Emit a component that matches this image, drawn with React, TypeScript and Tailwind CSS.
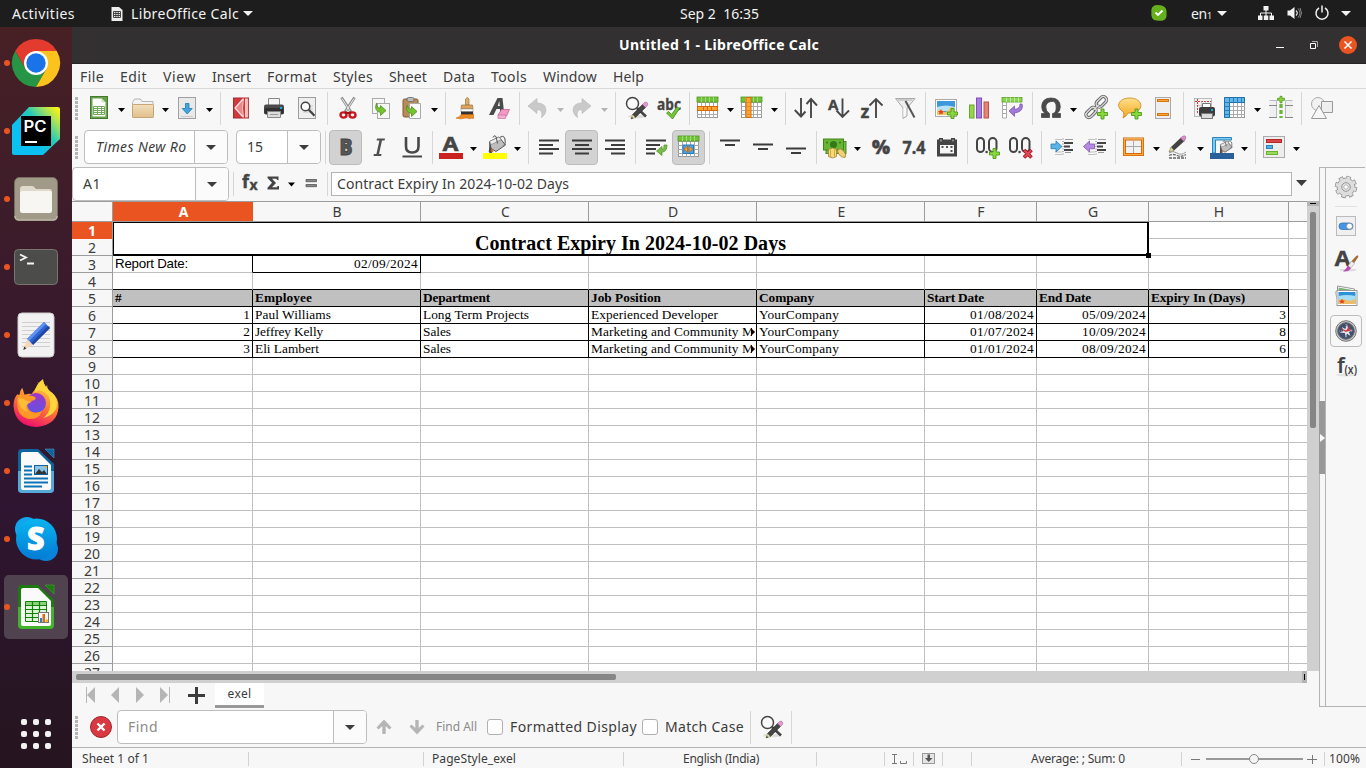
import React, { useLayoutEffect, useRef } from "react";

/** Text whose tracking is adjusted so that it spans `w` pixels. */
function T({ w, className = "", children }: { w: number; className?: string; children: string }) {
  const ref = useRef<HTMLSpanElement>(null);
  useLayoutEffect(() => {
    const el = ref.current;
    if (!el) return;
    el.style.letterSpacing = "0px";
    const natural = el.getBoundingClientRect().width;
    el.style.letterSpacing = `${(w - natural) / children.length}px`;
  }, [w, children]);
  return (
    <span ref={ref} className={`inline-block shrink-0 whitespace-pre ${className}`}>
      {children}
    </span>
  );
}

const plus = (x: number, y: number) => (
  <path
    d={`M${x - 1.5} ${y - 5}h3v3.5h3.5v3h-3.5v3.5h-3v-3.5h-3.5v-3h3.5z`}
    fill="#8ad840"
    stroke="#4e9a16"
    strokeWidth="0.9"
  />
);

const gridCells = (
  <>
    <rect x="1.5" y="1.5" width="20" height="20" fill="#fff" stroke="#999" />
    <path d="M1 6.5h21M1 10.5h21M1 14.5h21M1 18.5h21M5.5 2v20M9.5 2v20M13.5 2v20M17.5 2v20" stroke="#aaa" />
    <rect x="1" y="1" width="21" height="5" fill="#73c23c" stroke="#4e9a1b" strokeWidth="0.8" />
    <path d="M5.5 1v5M9.5 1v5M13.5 1v5M17.5 1v5" stroke="#9ddc70" />
  </>
);

const magnifierPencil = (
  <>
    <ellipse cx="13" cy="20.5" rx="9" ry="1.8" fill="#ddd" />
    <circle cx="8.5" cy="7.5" r="6" fill="#fafafa" stroke="#444" strokeWidth="1.5" />
    <path d="M13 12l9 8.5" stroke="#444" strokeWidth="2.6" />
    <path d="M8.5 18.5L19 8l3 3-10.5 10.5z" fill="#454545" stroke="#222" strokeWidth="0.5" />
    <path d="M8.5 18.5l3 3L7 23z" fill="#efdf86" stroke="#555" strokeWidth="0.4" />
    <path d="M7 23l1-2 1 1.2z" fill="#111" />
    <path d="M18.5 8.5l2-2q1.500-1 2.700.2t.2 2.800l-1.900 2z" fill="#e69ad2" stroke="#965a87" strokeWidth="0.5" />
  </>
);

const bucket = (
  <>
    <path d="M4.500 6.500L14 2l6.500 8-9.500 6.500-5-3z" fill="#bdbdbd" stroke="#555" />
    <path d="M4.500 6.500L14 2l2 2.500-9.500 5z" fill="#eee" stroke="#888" strokeWidth=".7" />
    <path d="M15 2.500q4-3 5 2t-2 7" fill="none" stroke="#777" strokeWidth="1.300" />
    <path d="M8 2.500q1-3 3-1l1.500 7" fill="none" stroke="#555" />
    <path d="M4.500 6.500l2.500 9.500q1 2-1.500 2t-1.500-3z" fill="#4b4b4b" />
    <path d="M7 13l1.500 4H6z" fill="#d4691c" />
  </>
);

const paperLines = <path d="M8 10h10M8 13h10M8 16h10" stroke="#ccc" />;

const Txt = ({ x, y, s, c = "#444", children, cond }: { x: number; y: number; s: number; c?: string; children: string; cond?: number }) => (
  <text x={x} y={y} fontSize={s} fontWeight="bold" fill={c} stroke={c} strokeWidth=".3" fontFamily="'Noto Sans', sans-serif" textLength={cond} lengthAdjust="spacingAndGlyphs">
    {children}
  </text>
);

const icons: Record<string, React.ReactNode> = {
  new: (
    <>
      <rect x="3.500" y=".5" width="17" height="22" fill="#66a04a" stroke="#437a2d" />
      <path d="M5.500 2.500h9l4 4v14h-13z" fill="#fff" />
      <path d="M14.500 2.500v4h4z" fill="#cfe3c4" />
      <path d="M6.500 10.500h11v8h-11zM6.500 12.500h11M6.500 14.500h11M6.500 16.500h11M10.500 10v8.500M14.500 10v8.500" fill="none" stroke="#74a85c" />
    </>
  ),
  open: (
    <>
      <path d="M1.500 21V6.500l2-3.500h6l1.500 2.500h11V21z" fill="#f3f3f3" stroke="#b5b5b5" />
      <rect x="1.500" y="8.500" width="21" height="13" rx=".8" fill="url(#tan)" stroke="#c5a573" />
    </>
  ),
  save: (
    <>
      <rect x="3.500" y="1.500" width="17" height="21" fill="#e9e9e9" stroke="#a0a0a0" />
      <path d="M10.500 7.500h3.500v5h3.200L12.200 18 7.300 12.500h3.200z" fill="#43a5df" stroke="#2277ad" strokeWidth=".8" />
      <path d="M6 20.500h12" stroke="#ccc" />
    </>
  ),
  pdf: (
    <>
      <rect x="4.500" y="2" width="15" height="20" fill="#d3383b" stroke="#a9282c" />
      <path d="M14 3L6 12l8 9" fill="#e88" stroke="#ffe9e9" strokeWidth="1.200" />
      <path d="M14.500 2.500q-2 10 0 19M16.500 2.500v19" fill="none" stroke="#f9c6c6" />
      <path d="M17 2.500h2.200v19H17z" fill="#f0bcbc" />
    </>
  ),
  print: (
    <>
      <path d="M6.500 10V2.500h11V10" fill="#f5f5f5" stroke="#888" />
      <rect x="2" y="8.500" width="20" height="10" rx="2" fill="#4a4a4a" />
      <rect x="2.500" y="12" width="19" height="6" rx="1.500" fill="#303030" />
      <rect x="18" y="11" width="2" height="2" fill="#19a9e8" />
      <path d="M5.500 15.500h13v6h-13z" fill="#ddd" stroke="#888" />
      <path d="M8 18.500h8" stroke="#999" />
    </>
  ),
  preview: (
    <>
      <rect x="3.500" y="1.500" width="17" height="21" fill="#efefef" stroke="#9d9d9d" />
      {paperLines}
      <circle cx="10.500" cy="10.500" r="4.300" fill="#fff" stroke="#444" strokeWidth="1.500" />
      <path d="M13.800 13.800l5.700 6" stroke="#444" strokeWidth="2.300" />
    </>
  ),
  cut: (
    <>
      <path d="M5.500 1.500L15 16M18.500 1.500L9 16" stroke="#8b8b8b" strokeWidth="2.800" />
      <path d="M6 2.500L14 15M18 2.500L10 15" stroke="#eee" strokeWidth="1" />
      <ellipse cx="7.500" cy="19" rx="3" ry="2.600" fill="none" stroke="#c8171e" strokeWidth="2.400" />
      <ellipse cx="16.500" cy="19" rx="3" ry="2.600" fill="none" stroke="#c8171e" strokeWidth="2.400" />
      <path d="M9 16q3 2 6 0" stroke="#a01015" strokeWidth="2" fill="none" />
    </>
  ),
  copy: (
    <>
      <rect x="3.500" y="2.500" width="12" height="15" fill="#f7f7f7" stroke="#aaa" />
      <rect x="8.500" y="7.500" width="12" height="15" fill="#f7f7f7" stroke="#aaa" />
      <path d="M7.500 7q-.5 5 4 5V9.500l5.500 5-5.500 5v-3q-7-1.500-4-9.500z" fill="#74c42f" stroke="#4c9119" strokeWidth=".8" />
    </>
  ),
  paste: (
    <>
      <rect x="3" y="3" width="15" height="18" rx="1.500" fill="#ba8b56" stroke="#7f5c35" />
      <rect x="7" y="1.500" width="7" height="4" rx="1.500" fill="#bbb" stroke="#666" strokeWidth=".8" />
      <path d="M9.500 7.500h11v15h-11z" fill="#fafafa" stroke="#aaa" />
      <path d="M7 9q0 4 4.500 4V10.500l5.500 5-5.500 5v-3q-6.500-1-4.500-8.500z" fill="#74c42f" stroke="#4c9119" strokeWidth=".8" />
    </>
  ),
  brush: (
    <>
      <path d="M11.500 9V3q1.500-3 3.500 0v6z" fill="#ddb071" stroke="#9c7440" strokeWidth=".7" />
      <path d="M7.500 9h11l.5 4H7z" fill="#d9a55c" stroke="#9c7440" strokeWidth=".7" />
      <path d="M7 13h12v3H7z" fill="#fff" stroke="#888" strokeWidth=".5" />
      <path d="M7 15.500h12l.3 3.500H7z" fill="#333" />
      <path d="M7 18.500h12.500v4q-2-.8-4 .2-1.500-1-4.500-.6-4 1.500-9 0 4-1 5-3.600z" fill="#ee8b23" stroke="#c96a0d" strokeWidth=".6" />
    </>
  ),
  clear: (
    <>
      <path d="M2 19L10.500 2h5L17 16h-3.800l-.3-3H9.500L6.500 19z M10.800 10h2l-.5-5z" fill="#4a4a4a" fillRule="evenodd" />
      <path d="M11 19l3.500-5.500h8L19.500 20 11.500 20z" fill="#f19bc3" stroke="#c46493" strokeWidth=".8" />
      <path d="M11 19h8l-.5 3.500h-7.500z" fill="#f5aed0" stroke="#c46493" strokeWidth=".6" />
    </>
  ),
  undo: <path d="M2 10L11 2.500v4.500q9 0 9 7.500-1 5-4.500 7 2-8-4.500-8v4z" fill="#c9c9c9" stroke="#b5b5b5" strokeWidth=".6" />,
  redo: <path d="M21 10L12 2.500v4.500q-9 0-9 7.500 1 5 4.500 7-2-8 4.500-8v4z" fill="#c9c9c9" stroke="#b5b5b5" strokeWidth=".6" />,
  find: magnifierPencil,
  abc: (
    <>
      <text x="0" y="14" fontSize="15.500" fontWeight="bold" fill="#444" stroke="#444" strokeWidth=".3" fontFamily="'Noto Sans', sans-serif" textLength="24" lengthAdjust="spacingAndGlyphs">
        abc
      </text>
      <path d="M9.500 17l2-1.500 3 3L20 11l2.500 1.500-7 10.500z" fill="#72c53a" stroke="#458f1a" strokeWidth=".8" />
    </>
  ),
  rows: (
    <>
      {gridCells}
      <rect x="1.500" y="10.500" width="20" height="4" fill="#ffa534" stroke="#d66a0a" />
      <path d="M7.500 10.500v4M11.500 10.500v4M15.500 10.500v4" stroke="#d66a0a" />
    </>
  ),
  cols: (
    <>
      {gridCells}
      <rect x="6" y="1.500" width="5" height="20" fill="#ffa534" stroke="#d66a0a" />
      <path d="M6 6.500h5M6 10.500h5M6 14.500h5M6 18.500h5" stroke="#e0801f" strokeWidth=".7" />
    </>
  ),
  sort: <path d="M7 2v18M.8 14L7 20.500l4.500-5M17 22V3.500M12.500 8L17 3l6 6.500" fill="none" stroke="#484848" strokeWidth="1.900" />,
  sortaz: (
    <>
      <Txt x={1} y={13.5} s={15}>A</Txt>
      <path d="M15.500 2.500v18M9.500 14.500l6 6.500 6.500-6.500" fill="none" stroke="#484848" strokeWidth="1.900" />
    </>
  ),
  sortza: (
    <>
      <Txt x={0.5} y={22} s={18}>z</Txt>
      <path d="M16 22V3.500M9.500 9.500L16 3l6.500 6.500" fill="none" stroke="#484848" strokeWidth="1.900" />
    </>
  ),
  funnel: (
    <>
      <path d="M2.500 2.500h19.500L14 12v8l-4 2.500V12z" fill="#eee" stroke="#aaa" />
      <path d="M4.500 4h15" stroke="#ccc" strokeWidth="2" />
      <path d="M12.500 5l9 16.500" stroke="#555" strokeWidth="2" />
      <path d="M10.500 12v9l2-1.500V12z" fill="#fff" />
    </>
  ),
  image: (
    <>
      <rect x="1.500" y="3.500" width="21" height="17" fill="#fff" stroke="#aaa" />
      <rect x="3" y="5" width="18" height="14" fill="#3c98dc" />
      <path d="M3 11q9-3 18 0v4H3z" fill="#b7e3f9" />
      <path d="M3 15q3-3 6 0t6-2 6 2v4H3z" fill="#f0c46d" />
      <path d="M7 13l1 2h2l-1.500 1.500.5 2-2-1-2 1 .5-2L4 15h2z" fill="#e1431c" />
      {plus(18.5, 17.5)}
    </>
  ),
  chart: (
    <>
      <rect x="2.500" y="9" width="4.500" height="13" fill="#93d64c" stroke="#68a92b" />
      <rect x="9.500" y="2" width="5" height="20" fill="#a77be0" stroke="#7c50b8" />
      <rect x="17" y="6" width="4.500" height="16" fill="#e58378" stroke="#bc5448" />
    </>
  ),
  pivot: (
    <>
      <path d="M2.500 5v17h4V5M2.500 9.500h4M2.500 13.500h4M2.500 17.500h4" fill="#fff" stroke="#aaa" />
      <rect x="2" y="1.500" width="20" height="4.500" fill="#8dd357" stroke="#57a222" strokeWidth=".8" />
      <path d="M6.500 1.500v4.500M10.500 1.500v4.500M14.500 1.500v4.500M18.500 1.500v4.500" stroke="#c0ea9d" />
      <path d="M20 8q2.500-1 2.500 2 0 6-8 7v3.500L9 15l5.500-5v3.300Q20 13 20 8z" fill="#a07ad6" stroke="#7a52b3" strokeWidth=".7" />
    </>
  ),
  omega: (
    <path
      d="M2.500 21.500h8v-4Q6.800 15.500 6.800 11T12 5.500 17.200 11t-3.700 6.500v4h8v-4h-3.700q3.500-2 3.500-7Q21 2 12 2T2.700 10.500q0 5 3.500 7H2.500z"
      fill="#4a4a4a"
      stroke="#4a4a4a"
      strokeWidth=".8"
    />
  ),
  link: (
    <>
      <g fill="none" stroke="#666" strokeWidth="3.200">
        <rect x="10.500" y="2.500" width="12" height="6.500" rx="3.200" transform="rotate(-45 16.500 6)" />
        <rect x="0" y="13.500" width="12" height="6" rx="3" transform="rotate(-45 6 16.500)" />
        <path d="M8 14.500l6-6" />
      </g>
      <g fill="none" stroke="#ddd" strokeWidth="1.300">
        <rect x="10.500" y="2.500" width="12" height="6.500" rx="3.200" transform="rotate(-45 16.500 6)" />
        <rect x="0" y="13.500" width="12" height="6" rx="3" transform="rotate(-45 6 16.500)" />
        <path d="M8 14.500l6-6" />
      </g>
      {plus(17.5, 18)}
    </>
  ),
  comment: (
    <>
      <path d="M12 2c14 0 15 15 0 15q-1 0-2 0-1 3-5 5 1.500-3 .5-6C-3 11 0 2 12 2z" fill="url(#amber)" stroke="#cb8618" strokeWidth=".8" />
      {plus(18.5, 18)}
    </>
  ),
  header: (
    <>
      <rect x="4.500" y="1.500" width="15" height="21" fill="#eee" stroke="#aaa" />
      <rect x="6.500" y="3.500" width="11" height="2" fill="#fba63d" stroke="#d9740c" />
      <rect x="6.500" y="17.500" width="11" height="2" fill="#fba63d" stroke="#d9740c" />
    </>
  ),
  range: (
    <>
      <rect x="2.500" y="2.500" width="17" height="18" fill="#f2f2f2" stroke="#bbb" />
      <path d="M5.500 3v15M3 5.500h16" stroke="#dc3535" strokeDasharray="2 1" />
      <path d="M9.500 5.500v12M13.500 5.500v6M6 9.500h12" stroke="#ccc" />
      <path d="M10.500 12V7.500h8V12" fill="#fff" stroke="#777" />
      <rect x="7" y="11" width="16" height="9.500" rx="2" fill="#3d3d3d" />
      <rect x="19" y="13" width="2" height="2" fill="#19a9e8" />
      <rect x="9.500" y="17.500" width="11" height="5" fill="#ddd" stroke="#777" />
    </>
  ),
  freeze: (
    <>
      <rect x="1.500" y="1.500" width="20" height="20" fill="#fff" stroke="#999" />
      <path d="M1 10.500h21M1 14.500h21M1 18.500h21M10.500 1v21M14.500 1v21M18.500 1v21" stroke="#aaa" />
      <path d="M1.500 1.500h20v5h-15v15h-5z" fill="#62b5ea" stroke="#1e72aa" />
      <path d="M6.500 2v4.500M10.500 2v4.500M14.500 2v4.500M18.500 2v4.500M2 6.500h4.500M2 10.500h4.500M2 14.500h4.500M2 18.500h4.500" stroke="#2c80ba" />
    </>
  ),
  split: (
    <>
      <path d="M.5 4.500h7v17h-7M23.500 4.500h-7v17h7" fill="#f0f0f0" stroke="#bbb" />
      <path d="M0 9.500h8M16 9.500h8M0 21.500h8M16 21.500h8" stroke="#888" />
      <path d="M12 8v14" stroke="#4d9e1a" strokeWidth="3" strokeDasharray="4 2" />
      <path d="M12 8v14" stroke="#7ac843" strokeWidth="1.300" strokeDasharray="4 2" />
      <path d="M11 .3h2v2h2.500v2H13v2.500h-2V4.300H8.500v-2H11z" fill="#8ad840" stroke="#4e9a16" strokeWidth=".8" />
    </>
  ),
  shapes: (
    <>
      <circle cx="8" cy="8" r="6.500" fill="#f2f2f2" stroke="#aaa" />
      <path d="M11.500 5.500h11v11h-11z" fill="#eee" stroke="#999" />
      <path d="M9 9.500l7.500 13h-15z" fill="#f7f7f7" stroke="#999" />
    </>
  ),
  bold: (
    <text x="5.500" y="20" fontFamily="'Noto Sans',sans-serif" fontWeight="900" fontSize="22" fill="#555" stroke="#444" strokeWidth=".9" textLength="13" lengthAdjust="spacingAndGlyphs">
      B
    </text>
  ),
  italic: <path d="M10 3.500h8l-.4 2H15l-3 13.500h2.500l-.4 2H6.500l.4-2h2.500l3-13.500H9.600z" fill="#505050" />,
  underline: (
    <>
      <path d="M6 2v9.500q0 6 6.200 6t6.300-6V2" fill="none" stroke="#484848" strokeWidth="2.600" />
      <path d="M2.500 21.500h19.500" stroke="#484848" strokeWidth="2" />
    </>
  ),
  fontcolor: (
    <>
      <text x="3.500" y="16" fontSize="20" fontWeight="bold" fill="#444" stroke="#444" strokeWidth=".5" fontFamily="'Noto Sans', sans-serif" textLength="16" lengthAdjust="spacingAndGlyphs">
        A
      </text>
      <path d="M0 18h24v6H0z" fill="#cb2020" />
    </>
  ),
  fill: (
    <>
      <g transform="translate(2 0)">{bucket}</g>
      <path d="M0 18h24v6H0z" fill="#ff0" />
    </>
  ),
  left: <path d="M2 5.500h20M2 10h14M2 14h20M2 18.500h14" stroke="#3c3c3c" strokeWidth="1.800" />,
  center: <path d="M2 5.500h20M5 10h14M2 14h20M5 18.500h14" stroke="#3c3c3c" strokeWidth="1.800" />,
  right: <path d="M2 5.500h20M8 10h14M2 14h20M8 18.500h14" stroke="#3c3c3c" strokeWidth="1.800" />,
  wrap: (
    <>
      <path d="M2 5.500h20M2 10h14M2 14h10M2 18.500h9" stroke="#3c3c3c" strokeWidth="1.800" />
      <path d="M20 10h3q0 7-5 7v3.500L12.500 16 18 11.500v3q2.500-.5 2-4.500z" fill="#78bf48" stroke="#508b2a" strokeWidth=".7" />
    </>
  ),
  merge: (
    <>
      {gridCells}
      <rect x="6" y="10" width="10.500" height="8.500" fill="#48a4e8" stroke="#227bbd" />
      <path d="M10.500 11v6.500L7 14.200zM12.200 11v6.500l3.500-3.300z" fill="#f69a28" stroke="#c05b08" strokeWidth=".6" />
    </>
  ),
  top: <path d="M2 5.500h20M7 10h10" stroke="#3c3c3c" strokeWidth="1.800" />,
  middle: <path d="M2 9.500h20M7 14h10" stroke="#3c3c3c" strokeWidth="1.800" />,
  bottom: <path d="M2 13.500h20M7 18h10" stroke="#3c3c3c" strokeWidth="1.800" />,
  money: (
    <>
      <rect x="3" y="6.500" width="20" height="12" fill="#75bd44" stroke="#498921" />
      <rect x=".5" y="4" width="20" height="11" fill="#68b536" stroke="#408718" />
      <circle cx="10.500" cy="9.500" r="3.500" fill="#32791a" />
      <circle cx="4" cy="7.500" r="1" fill="#32791a" />
      <circle cx="17" cy="7.500" r="1" fill="#32791a" />
      <path d="M5.500 14.500q4-3 8 0v7q-4 3-8 0z" fill="#f3da7a" stroke="#a7832a" strokeWidth=".8" />
      <path d="M7.500 14.500v7.500M11.500 14.500v7.500" stroke="#d2ab48" />
      <path d="M15 14.500q3-2 6 2t1 6q-4 0-6-3t-1-5z" fill="#eed27a" stroke="#a7832a" strokeWidth=".8" />
    </>
  ),
  percent: (
    <text x="3" y="19" fontFamily="'Noto Sans',sans-serif" fontWeight="900" fontSize="19" fill="#444" stroke="#444" strokeWidth=".5" textLength="18" lengthAdjust="spacingAndGlyphs">
      %
    </text>
  ),
  number: (
    <text x=".5" y="18.500" fontSize="18.500" fontWeight="bold" fill="#444" stroke="#444" strokeWidth=".5" fontFamily="'Noto Sans', sans-serif" textLength="23" lengthAdjust="spacingAndGlyphs">
      7.4
    </text>
  ),
  calendar: (
    <>
      <path d="M2 4.500h2V3h4v1.500h8V3h4v1.500h2V21.500H2z" fill="#444" />
      <path d="M5 10h14v8.500H5z" fill="#f5f5f5" />
      <path d="M6.500 12h2M11 12h2M15.500 12h2M15.500 16h2" stroke="#555" strokeWidth="2" />
      <path d="M6 4.500v2M18 4.500v2" stroke="#ccc" />
    </>
  ),
  addDec: (
    <>
      <g fill="none" stroke="#444" strokeWidth="2">
        <rect x="1" y="3" width="7" height="14" rx="3.500" />
        <rect x="13" y="3" width="7.500" height="14" rx="3.700" />
      </g>
      <circle cx="10.600" cy="17" r="1.300" fill="#444" />
      {plus(18.5, 18.5)}
    </>
  ),
  delDec: (
    <>
      <g fill="none" stroke="#444" strokeWidth="2">
        <rect x="1" y="3" width="7" height="14" rx="3.500" />
        <rect x="13" y="3" width="7.500" height="14" rx="3.700" />
      </g>
      <circle cx="10.600" cy="17" r="1.300" fill="#444" />
      <path d="M15 15l7.500 7.500M22.500 15L15 22.500" stroke="#a31220" strokeWidth="3.600" />
      <path d="M15.500 15.500l6.500 6.500M22 15.500L15.500 22" stroke="#e34a55" strokeWidth="1.900" />
    </>
  ),
  indent: (
    <>
      <path d="M5 4.500h7M5 19.500h7M5 17h7" stroke="#bbb" strokeWidth=".9" />
      <path d="M13 3.500v17" stroke="#777" strokeDasharray="1 1.500" />
      <path d="M15 4.500h8M15 17.500h6" stroke="#999" />
      <path d="M14 8h9M14 11.500h6M14 15h9" stroke="#444" strokeWidth="1.900" />
      <path d="M1 9h5V6l6 5.500-6 5.500v-3.300H1z" fill="#5bb5e7" stroke="#2a7cad" strokeWidth=".8" />
    </>
  ),
  outdent: (
    <>
      <path d="M5 4.500h7M5 19.500h7M5 17h7" stroke="#bbb" strokeWidth=".9" />
      <path d="M13 3.500v17" stroke="#777" strokeDasharray="1 1.500" />
      <path d="M15 4.500h8M15 17.500h6" stroke="#999" />
      <path d="M14 8h9M14 11.500h6M14 15h9" stroke="#444" strokeWidth="1.900" />
      <path d="M11.500 9H6.500V6L.5 11.500l6 5.500v-3.300h5z" fill="#b48be2" stroke="#8053b6" strokeWidth=".8" />
    </>
  ),
  borders: (
    <>
      <rect x="1.500" y="3" width="20" height="17.500" fill="#f2f2f2" stroke="#d2690b" />
      <rect x="2.500" y="4" width="18" height="15.500" fill="none" stroke="#ffa83d" strokeWidth="1.300" />
      <rect x="3.500" y="5" width="16" height="13.500" fill="none" stroke="#d2690b" />
      <path d="M11.500 6v12M4 11.500h15" stroke="#aaa" />
    </>
  ),
  linestyle: (
    <>
      <path d="M5 12L15 2.500 18.500 6 8 15.500z" fill="#444" />
      <path d="M5 12l3 3.500L3 17z" fill="#e9e18c" stroke="#555" strokeWidth=".5" />
      <path d="M14.500 3q4-3.500 5-1.500T18 6.500z" fill="#dc8acb" stroke="#965a87" strokeWidth=".5" />
      <path d="M3 18q4-3 8 0t9-1" fill="none" stroke="#999" />
      <path d="M3 20.500q4-2 8 0t9-1M3 23h17" fill="none" stroke="#666" strokeWidth="1.300" strokeDasharray="3 1" />
    </>
  ),
  bordercolor: (
    <>
      <path d="M2.500 18V2.500h19V5H5.500v13z" fill="#7bcdf0" stroke="#2b85bb" />
      <g transform="translate(7 5) scale(.74)">{bucket}</g>
      <path d="M0 18h24v6H0z" fill="#2a6099" />
    </>
  ),
  condformat: (
    <>
      <rect x="1.500" y="1.500" width="21" height="21" fill="#ededed" stroke="#aaa" />
      <rect x="4.500" y="4.500" width="15" height="3" fill="#dc4545" stroke="#b12a2a" />
      <rect x="4.500" y="10.500" width="6" height="3" fill="#54aee2" stroke="#2a82b5" />
      <rect x="4.500" y="16.500" width="11" height="3" fill="#9bd95d" stroke="#6daf2f" />
    </>
  ),
  gear: (
    <>
      <circle cx="12" cy="12" r="9.500" fill="none" stroke="#909090" strokeWidth="3.500" strokeDasharray="4.460 3" />
      <circle cx="12" cy="12" r="9" fill="#ddd" stroke="#999" />
      <circle cx="12" cy="12" r="9.300" fill="none" stroke="#dedede" strokeWidth="2.400" strokeDasharray="3.300 4" strokeDashoffset="-.5" />
      <circle cx="12" cy="12" r="4.200" fill="#f7f7f7" stroke="#888" />
      <circle cx="12" cy="12" r="2.300" fill="#fff" stroke="#aaa" />
    </>
  ),
  props: (
    <>
      <rect x="2.500" y="2.500" width="19" height="19" fill="#f0f0f0" stroke="#bbb" />
      <rect x="5" y="9" width="14" height="6.500" rx="3.200" fill="#4596e6" stroke="#3672b2" strokeWidth=".8" />
      <circle cx="15.500" cy="12.200" r="3" fill="#fff" stroke="#778899" strokeWidth=".8" />
    </>
  ),
  styles: (
    <>
      <ellipse cx="14" cy="21" rx="9" ry="1.500" fill="#ddd" />
      <Txt x={0.5} y={16.5} s={22} cond={16}>A</Txt>
      <path d="M22 7.500q3-2 1.500 1L17 18l-2.500-2z" fill="#b46a28" stroke="#7d4415" strokeWidth=".5" />
      <path d="M17.500 12l3 2.500-4 5-2.500-2.500z" fill="#eee" stroke="#999" strokeWidth=".5" />
      <path d="M14 16.500l3 2.500q-2 4-8 3.500 3-2 5-6z" fill="#b94bb0" />
    </>
  ),
  gallery: (
    <>
      <path d="M3.500 2l17 3v12l-17 2z" fill="#fff" stroke="#999" />
      <path d="M4.500 3.500l14 2.500v8H4.500z" fill="#7eb07a" />
      <path d="M1 8l4-2v14z" fill="#fff" stroke="#aaa" strokeWidth=".7" />
      <rect x="3" y="6.500" width="20" height="15" fill="#fff" stroke="#999" />
      <rect x="4.500" y="8" width="17" height="12" fill="#2d92d8" />
      <path d="M4.500 12q8-2 17 0v5h-17z" fill="#a5dcf6" />
      <path d="M4.500 16q3-2 7 0t10-1v5h-17z" fill="#edbc63" />
      <path d="M8 15l1 1.500 2 .2-1.500 1.200.3 1.600L8 18.700l-1.800.8.3-1.600L5 16.700l2-.2z" fill="#e1431c" />
    </>
  ),
  compass: (
    <>
      <circle cx="12" cy="12" r="10.300" fill="#c9c9c9" stroke="#777" />
      <circle cx="12" cy="12" r="8.300" fill="#41506e" stroke="#666" />
      <path d="M12 5v14M5 12h14" stroke="#9aa3b5" strokeWidth="1" strokeDasharray="1 1" />
      <path d="M8 8l3.500 2.200L13 5l1.200 5.500L19 11l-4.200 2 1.700 4-3.700-2.500L12 19l-1-5-5.500-.5 4.200-1.500z" fill="#e8ebf0" />
      <path d="M5.500 8.500l6.500 3L16.500 5.500l-1.500 5 3.500.5-5 1.500-2 .5z" fill="#cf3740" />
    </>
  ),
  fx: (
    <>
      <ellipse cx="12" cy="20" rx="10" ry="1.500" fill="#e4e4e4" />
      <text x="3" y="18" fontFamily="'Noto Sans',sans-serif" fontSize="21" fontWeight="600" fill="#444">
        f
      </text>
      <text x="10.500" y="19" fontFamily="'Noto Sans',sans-serif" fontSize="12" fontWeight="600" fill="#444" textLength="12.500" lengthAdjust="spacingAndGlyphs">
        (x)
      </text>
    </>
  ),
};

const Icon = ({ n, className = "" }: { n: string; className?: string }) => (
  <svg viewBox="0 0 24 24" className={`size-6 shrink-0 overflow-visible ${className}`}>
    {icons[n]}
  </svg>
);

const Arrow = ({ className = "w-[7px] h-1 text-black" }: { className?: string }) => (
  <svg viewBox="0 0 8 4" preserveAspectRatio="none" className={`shrink-0 ${className}`}>
    <path d="M0 0h8L4 4z" fill="currentColor" />
  </svg>
);

const Btn = ({ n, on }: { n: string; on?: boolean }) => (
  <div
    className={`flex h-[35px] w-[33px] shrink-0 items-center ${on ? "rounded-[4px] border border-[#bcbcbc] bg-[#d2d2d2] pl-1" : "pl-[5px]"}`}
  >
    <Icon n={n} />
  </div>
);

const Drop = ({ n, gray }: { n: string; gray?: boolean }) => (
  <div className="flex h-[35px] w-11 shrink-0 items-center gap-[7px] pl-[3px]">
    <Icon n={n} />
    <Arrow className={gray ? "mt-[3px] h-1 w-[7px] text-[#b5b5b5]" : "mt-[3px] h-1 w-[7px] text-black"} />
  </div>
);

const Sep = () => (
  <div className="flex h-[33px] w-2 shrink-0 justify-center">
    <div className="ml-px w-px bg-[#d6d6d6]" />
  </div>
);

const Grip = () => (
  <div className="mr-[6px] ml-[3px] flex w-[3px] shrink-0 flex-col gap-px">
    {[0, 1, 2, 3, 4, 5].map((i) => (
      <div key={i} className="h-[3px] w-[3px] bg-[#b4b4b4]" />
    ))}
  </div>
);

function ToolRow({ spec }: { spec: string }) {
  return (
    <>
      {spec.split(" ").map((s, i) => {
        if (s === "|") return <Sep key={i} />;
        const name = s.replace(/[:!*]/g, "");
        if (s.endsWith(":")) return <Drop key={i} n={name} />;
        if (s.endsWith("!")) return <Drop key={i} n={name} gray />;
        return <Btn key={i} n={name} on={s.endsWith("*")} />;
      })}
    </>
  );
}

const menus: [string, number, string][] = [
  ["File", 24, "mr-4"],
  ["Edit", 27, "mr-4"],
  ["View", 33, "mr-4"],
  ["Insert", 39, "mr-4"],
  ["Format", 50, "mr-4"],
  ["Styles", 40, "mr-4"],
  ["Sheet", 38, "mr-4"],
  ["Data", 32, "mr-4"],
  ["Tools", 36, "mr-4"],
  ["Window", 54, "mr-4"],
  ["Help", 31, ""],
];

const header = ["#", "Employee", "Department", "Job Position", "Company", "Start Date", "End Date", "Expiry In (Days)"];
const headerW = [7, 57, 67, 70, 55, 57, 52, 94];
const records = [
  ["1", "Paul Williams", "Long Term Projects", "Experienced Developer", "YourCompany", "01/08/2024", "05/09/2024", "3"],
  ["2", "Jeffrey Kelly", "Sales", "Marketing and Community M", "YourCompany", "01/07/2024", "10/09/2024", "8"],
  ["3", "Eli Lambert", "Sales", "Marketing and Community M", "YourCompany", "01/01/2024", "08/09/2024", "6"],
];
const recordW = [
  [0, 76, 106, 127, 80, 64, 64, 0],
  [0, 68, 28, 163, 80, 64, 64, 0],
  [0, 64, 28, 163, 80, 64, 64, 0],
];
const gridCols = "grid grid-cols-[140px_168px_168px_168px_168px_112px_112px_140px_18px]";

function Sheet() {
  const rows = Array.from({ length: 27 }, (_, i) => i + 1);
  return (
    <div className="relative flex h-[470px] w-[1235px] flex-col overflow-hidden bg-white">
      <div className="flex h-[21px] shrink-0 border-y border-[#9c9c9c] bg-[#f7f7f7] text-[14px] leading-[19px] text-[#3c3c3c]">
        <div className="w-[41px] border-r border-[#9c9c9c]" />
        <div className={`${gridCols} text-center`}>
          {["A", "B", "C", "D", "E", "F", "G", "H", ""].map((c, i) => (
            <div
              key={i}
              className={
                i === 0
                  ? "border-r border-[#e95420] bg-[#e95420] pl-0.5 font-bold text-white"
                  : i === 8
                    ? ""
                    : i === 2 || i === 4
                      ? "border-r border-[#9c9c9c] pl-0.5"
                      : "border-r border-[#9c9c9c] pl-px"
              }
            >
              {c}
            </div>
          ))}
        </div>
      </div>
      <div className="flex">
        <div className="w-[41px] shrink-0 border-r border-[#9c9c9c] bg-[#f7f7f7] text-center text-[14px] text-[#3c3c3c]">
          {rows.map((r) => (
            <div
              key={r}
              className={`h-[17px] overflow-hidden border-b leading-[18px] ${r === 1 ? "border-[#e95420] bg-[#e95420] font-bold text-white" : "border-[#9c9c9c]"}`}
            >
              {r}
            </div>
          ))}
        </div>
        <div className={`${gridCols} auto-rows-[17px] font-['Liberation_Serif',serif] text-[13.33px] leading-4 text-black`}>
          <div className="col-span-7 row-span-2 flex justify-center pt-[9px] pr-px text-[20px] leading-6 font-bold">
            <T w={311}>Contract Expiry In 2024-10-02 Days</T>
          </div>
          {rows.map((r) =>
            header.concat("").map((_, c) => {
              if (r <= 2 && c < 7) return null;
              const table = r >= 5 && r <= 8 && c < 8;
              const right = table || (r === 3 && c < 2) ? "border-r-black" : "border-r-[#c0c0c0]";
              const bottom = table || (r === 4 && c < 8) || (r === 3 && c === 1) ? "border-b-black" : "border-b-[#c0c0c0]";
              const edge = c === 8 ? "border-b" : "border-r border-b";
              const bg = r === 5 && c < 8 ? "bg-[#c0c0c0] font-bold" : "";
              const numeric = (r > 5 && (c === 0 || c > 4)) || (r === 3 && c === 1);
              const clipped = c === 3 && (r === 7 || r === 8);
              let content: React.ReactNode = null;
              if (r === 3 && c === 0) content = <T w={73} className="font-['Liberation_Sans',sans-serif]">Report Date:</T>;
              if (r === 3 && c === 1) content = <T w={64}>02/09/2024</T>;
              if (r === 5 && c < 8) content = <T w={headerW[c]}>{header[c]}</T>;
              if (r > 5 && table) {
                const v = records[r - 6][c];
                const w = recordW[r - 6][c];
                content = w ? <T w={w}>{v}</T> : v;
                if (clipped) content = <div className="w-[161px] overflow-hidden">{content}</div>;
              }
              return (
                <div
                  key={`${r}-${c}`}
                  className={`relative flex min-w-0 overflow-hidden px-0.5 ${edge} ${right} ${bottom} ${bg} ${numeric ? "justify-end" : ""}`}
                >
                  {content}
                  {clipped && (
                    <svg viewBox="0 0 4 6" className="absolute top-[5px] right-px h-1.5 w-1">
                      <path d="M0 0h1l3 3-3 3H0z" fill="#000" />
                      <path d="M2 1.500l2 1.500-1 .5z" fill="#c00" />
                    </svg>
                  )}
                </div>
              );
            }),
          )}
        </div>
      </div>
      <div className="absolute top-[21px] left-[41px] h-[34px] w-[1036px] border-t border-r-2 border-b-2 border-l border-black">
        <div className="absolute -right-1 -bottom-1 size-[5px] bg-black" />
      </div>
    </div>
  );
}

const Combo = ({ className, children }: { className: string; children: React.ReactNode }) => (
  <div className={`flex h-[34px] shrink-0 items-center overflow-hidden rounded-[4px] border border-[#bdbdbd] bg-white ${className}`}>
    <div className="flex h-full flex-1 items-center overflow-hidden pb-0.5">{children}</div>
    <div className="flex h-full w-[33px] items-center justify-center border-l border-[#bdbdbd] bg-[#fbfbfb]">
      <Arrow className="h-[5px] w-[10px] text-[#3c3c3c]" />
    </div>
  </div>
);

function Doc({ blue }: { blue?: boolean }) {
  const dark = blue ? "#0e639c" : "#1d7a10";
  const light = blue ? "#57a9d8" : "#43b22c";
  return (
    <>
      <path d="M10 2h16l16 15v25q0 4-4 4H10q-4 0-4-4V6q0-4 4-4z" fill={dark} />
      <path d="M6 24h36v18q0 4-4 4H10q-4 0-4-4z" fill={light} />
      <path d="M33 2h9v9z" fill={dark} stroke={light} strokeWidth=".5" />
      <path d="M11 5h15l13 13v23q0 2-2 2H11q-2 0-2-2V7q0-2 2-2z" fill="#fafafa" />
      {blue ? (
        <>
          <path d="M12 19.500h8M12 23.500h8M12 27.500h8M12 31.500h24M12 35.500h24M12 39.500h18" stroke="#0e72b4" strokeWidth="1.900" />
          <rect x="22.500" y="18.500" width="13" height="9" fill="#89c4e8" stroke="#0e639c" />
          <path d="M23 27l4-5 3 3 2-2 3 4z" fill="#333" />
          <path d="M32 19h3v3z" fill="#f3b01b" />
        </>
      ) : (
        <>
          <path d="M13.500 18.500h21v20h-21z" fill="#dff5d8" stroke="#138008" />
          <path d="M14 19h20v3.500H14z" fill="#8ad27b" />
          <path d="M13 22.500h22M13 26.500h22M13 30.500h22M13 34.500h22M20.500 18v20M27.500 18v20" stroke="#138008" strokeWidth="1.200" />
          <rect x="26.500" y="29.500" width="10" height="10" fill="#f7f7f7" stroke="#777" />
          <path d="M28 35h2v4h-2z" fill="#2b83c2" />
          <path d="M30.500 31h2.500v8h-2.500z" fill="#df6a16" />
          <path d="M33.500 36.500H36V39h-2.500z" fill="#e8b923" />
        </>
      )}
    </>
  );
}

const dock: React.ReactNode[] = [
  <>
    <path d="M3.200 12A24 24 0 0 1 44.800 12H24L13.600 30z" fill="#e33b2e" />
    <path d="M3.200 12A24 24 0 0 0 24 48L34.400 30H13.600z" fill="#269546" />
    <path d="M44.800 12A24 24 0 0 1 24 48L34.400 30 24 12z" fill="#fcc31e" />
    <circle cx="24" cy="24" r="12" fill="#fff" />
    <circle cx="24" cy="24" r="9.700" fill="#1a73e8" />
  </>,
  <>
    <path d="M17 0h29q2 0 2 2v30L31 48H2q-2 0-2-2V18z" fill="url(#pc)" />
    <path d="M9 9h30v30H9z" fill="#000" />
    <path d="M13 34h12v2H13z" fill="#fff" />
    <text x="11.500" y="24.500" fontSize="15.500" fontWeight="600" fontFamily="Inter, sans-serif" fill="#fff" textLength="23" lengthAdjust="spacingAndGlyphs">
      PC
    </text>
  </>,
  <>
    <rect x="2.500" y="2.500" width="43" height="43" rx="5" fill="#a29a89" stroke="#756e60" />
    <path d="M3 41q0 4 4 4h34q4 0 4-4" fill="none" stroke="#bcb5a5" strokeWidth="1.500" />
    <path d="M8 14q0-3 3-3h9q2 0 3 2l1 1h13q3 0 3 3v18H8z" fill="#ded9cb" />
    <rect x="8" y="16" width="32" height="22" rx="2.500" fill="#f8f6f2" />
  </>,
  <>
    <rect x="2.500" y="6.500" width="43" height="35" rx="4" fill="#4c4c4a" stroke="#77776f" />
    <path d="M8 11.500l6 3-6 3M15 20.500h7" fill="none" stroke="#f5f5f5" strokeWidth="1.800" />
  </>,
  <>
    <rect x="6" y="2" width="36" height="44" rx="4" fill="#f2f2f2" stroke="#ccc" />
    <path d="M10 11.500h28M10 15.500h28M10 19.500h28M10 23.500h28M10 27.500h28M10 31.500h28M10 35.500h28" stroke="#cfcfcf" />
    <path d="M15 28L32 11l6 6-17 17z" fill="#3064d4" />
    <path d="M15 28L32 11l2 2-17 17z" fill="#5d91f2" />
    <path d="M19 32L36 15l2 2-17 17z" fill="#2148a0" />
    <path d="M15 28l6 6-9.500 4.500z" fill="#f5d6b8" />
    <path d="M12.300 35.500l2 2-3 1.500z" fill="#333" />
  </>,
  <>
    <path d="M24 2q3 4 7 0Q33 8 39 13q8 6 7.500 15-1 18-22 20Q3 47 1.500 27q0-8 4-12l2 3q0-7 3-9l2 7q4-2 7-1L27 5z" fill="url(#fox)" />
    <path d="M31 0q-8 6-8 13 4-3 9 0 8 5 6 15-1 7-7 11Q46 35 45 23q-1-8-8-11-2-3-2-6-1 1-1 3Q31 4 31 0z" fill="#ffd53d" />
    <circle cx="24" cy="24" r="10" fill="url(#plum)" />
    <path d="M6 16q6-2 11 1 4-1 7 2-1 3-6 3-5 3-1 9 5 5 13 1-3 9-13 8Q2 37 6 16z" fill="#ff9826" />
    <path d="M6 19q5 0 9 3l5 .5q-3 2-4 2Q12 29 16 33q-7-2-9-8z" fill="#ffbc38" />
  </>,
  <Doc blue />,
  <>
    <circle cx="15" cy="14" r="12" fill="#12a5ef" />
    <circle cx="34" cy="34" r="12" fill="#0a83da" />
    <circle cx="24.500" cy="24" r="20.500" fill="url(#sky)" />
    <text x="15" y="35" fontSize="31" fontWeight="900" stroke="#fff" strokeWidth=".8" fontFamily="'Noto Sans', sans-serif" fill="#fff" textLength="17.500" lengthAdjust="spacingAndGlyphs">
      S
    </text>
  </>,
  <Doc />,
];

function Dock() {
  return (
    <div className="flex w-[72px] shrink-0 flex-col gap-1 bg-linear-to-b from-[#472024] via-[#2f1531] via-65% to-[#25151f] pt-1">
      {dock.map((d, i) => (
        <div key={i} className={`ml-1 flex h-16 w-16 items-center rounded-[5px] ${i === 8 ? "bg-[#51424f]" : ""}`}>
          <div className="size-[6px] rounded-full bg-[#e95420]" />
          <svg viewBox="0 0 48 48" className="ml-0.5 size-12 overflow-visible">
            {d}
          </svg>
        </div>
      ))}
      <div className="mt-[76px] ml-[21px] grid w-[30px] grid-cols-3 gap-1.5">
        {Array.from({ length: 9 }, (_, i) => (
          <div key={i} className="size-1.5 rounded-[2px] bg-[#f2f2f2]" />
        ))}
      </div>
    </div>
  );
}

const VSep = ({ className = "" }: { className?: string }) => <div className={`h-3.5 w-px shrink-0 bg-[#d2d2d2] ${className}`} />;

export default function App() {
  return (
    <div className="flex h-[768px] w-[1366px] flex-col overflow-hidden bg-[#f7f7f7] font-['Noto_Sans',sans-serif] text-[14px] text-[#3c3c3c]">
      <svg className="absolute size-0">
        <defs>
          <linearGradient id="tan" x2="0" y2="1"><stop stopColor="#f2dfbd" /><stop offset="1" stopColor="#e0bf8b" /></linearGradient>
          <linearGradient id="amber" x2="0" y2="1"><stop stopColor="#ffe08a" /><stop offset="1" stopColor="#f3a620" /></linearGradient>
          <linearGradient id="pc" x1=".3" y1=".6" x2="1" y2="0"><stop stopColor="#0bc0f2" /><stop offset=".4" stopColor="#25cbb8" /><stop offset=".7" stopColor="#a5e35c" /><stop offset=".92" stopColor="#f4f219" /></linearGradient>
          <linearGradient id="fox" x1=".8" y1="0" x2=".4" y2="1"><stop stopColor="#ffe14b" /><stop offset=".5" stopColor="#ff8230" /><stop offset="1" stopColor="#ee126b" /></linearGradient>
          <linearGradient id="plum" x2="0" y2="1"><stop stopColor="#a235c4" /><stop offset="1" stopColor="#5f55e6" /></linearGradient>
          <linearGradient id="sky" x2="0" y2="1"><stop stopColor="#08b5f0" /><stop offset="1" stopColor="#047bd5" /></linearGradient>
        </defs>
      </svg>

      <div className="flex h-[27px] shrink-0 items-center bg-[#1d1d1d] pl-3 text-[#f2f2f2]">
        <T w={63}>Activities</T>
        <svg viewBox="0 0 12 14" className="ml-9 h-3.5 w-3">
          <path d="M.5 0H8l3.500 3v11H.5z" fill="#eee" />
          <path d="M2.500 4.500h7v6h-7zM2.500 6.500h7M2.500 8.500h7M4.800 4.500v6M7.200 4.500v6" fill="none" stroke="#333" strokeWidth=".9" />
        </svg>
        <T w={108} className="ml-2">LibreOffice Calc</T>
        <Arrow className="ml-1 h-[5px] w-[10px]" />
        <T w={79} className="ml-[427px]">Sep 2  16:35</T>
        <svg viewBox="0 0 16 16" className="mb-0.5 ml-[392px] size-4">
          <path d="M4 .3q4-.8 8 .7 4 2 3.500 7 .8 6-3.500 7.500-5 .8-9-.5Q-.5 12 .5 8-.5 2 4 .3z" fill="#65b01c" />
          <path d="M4.500 7.500L7 10l4.500-4.500" fill="none" stroke="#fff" strokeWidth="1.800" />
        </svg>
        <T w={16} className="ml-6">en</T>
        <span className="mt-1 w-[6px] text-[9px]">1</span>
        <Arrow className="ml-1 h-[5px] w-[10px]" />
        <svg viewBox="0 0 16 14" className="mb-0.5 ml-[31px] h-3.5 w-4">
          <path d="M5.500 0h5v4.500h-5zM0 9.500h4.500V14H0zM5.800 9.500h4.500V14H5.800zM11.500 9.500H16V14h-4.500z" fill="#f2f2f2" />
          <path d="M8 4v6M2.500 10V7h11v3" fill="none" stroke="#f2f2f2" />
        </svg>
        <svg viewBox="0 0 16 14" className="mb-0.5 ml-[13px] h-3.5 w-4">
          <path d="M.5 4.500H3L7.500 1v12L3 9.500H.5z" fill="#f2f2f2" />
          <path d="M9 4.500q2.500 2.500 0 5" fill="none" stroke="#ddd" strokeWidth="1.200" />
          <path d="M11 2.500q4 4.500 0 9M13 2q3 5 0 10" fill="none" stroke="#888" strokeWidth="1" />
        </svg>
        <svg viewBox="0 0 16 16" className="mb-0.5 ml-[11px] size-4">
          <path d="M5 3a6 6 0 1 0 6 0M8 .5v7" fill="none" stroke="#f2f2f2" strokeWidth="1.500" />
        </svg>
        <Arrow className="ml-[11px] h-[5px] w-[10px]" />
      </div>

      <div className="flex min-h-0 flex-1">
        <Dock />
        <div className="flex w-[1294px] flex-col">
          <div className="relative flex h-[37px] shrink-0 items-center justify-center border-b border-[#242424] bg-[#323030] pb-0.5 text-[14px] font-bold text-white">
            <T w={200}>Untitled 1 - LibreOffice Calc</T>
            <div className="absolute inset-y-0 right-[9px] flex items-center gap-[25px]">
              <div className="mt-1 mr-px h-px w-2 bg-white" />
              <svg viewBox="0 0 8 8" className="size-2">
                <path d="M.5 2.500h5v5h-5z" fill="none" stroke="#fff" />
                <path d="M2 .5h5.500V6" fill="none" stroke="#aaa" />
              </svg>
              <svg viewBox="0 0 18 18" className="-ml-1 size-[18px]">
                <circle cx="9" cy="9" r="9" fill="#e95420" />
                <path d="M5.500 5.500l7 7M12.500 5.500l-7 7" stroke="#fff" strokeWidth="1.500" />
              </svg>
            </div>
          </div>
          <div className="flex h-[25px] shrink-0 items-center border-b border-[#d9d9d9] pl-2">
            {menus.map(([m, w, g]) => (
              <T key={m} w={w} className={g}>{m}</T>
            ))}
          </div>
          <div className="flex h-[39px] shrink-0 items-center pb-px">
            <Grip />
            <ToolRow spec="new: open: save: | pdf print preview | cut copy paste: | brush clear | undo! redo! | find abc | rows: cols: | sort sortaz sortza funnel | image chart pivot | omega: link comment header | range freeze: split | shapes" />
          </div>
          <div className="flex h-[39px] shrink-0 items-center pb-px">
            <Grip />
            <Combo className="mr-2 w-36">
              <div className="ml-[11px] w-[90px] overflow-hidden">
                <T w={120} className="italic">Times New Roman</T>
              </div>
            </Combo>
            <Combo className="w-[85px]">
              <T w={16} className="ml-2.5">15</T>
            </Combo>
            <ToolRow spec="| bold* italic underline | fontcolor: fill: | left center* right | wrap merge* | top middle bottom | money: percent number calendar | addDec delDec | indent outdent | borders: linestyle: bordercolor: | condformat:" />
          </div>

          <div className="flex h-[541px] shrink-0">
            <div className="flex w-[1247px] flex-col">
              <div className="flex h-[34px] shrink-0 items-center">
                <Combo className="w-[157px]">
                  <T w={18} className="ml-2.5">A1</T>
                </Combo>
                <div className="ml-1 h-6 w-px bg-[#d6d6d6]" />
                <svg viewBox="0 0 76 20" className="mb-0.5 ml-2 h-5 w-[76px]">
                  <text x="0" y="15" fontSize="18" fontWeight="bold" stroke="#444" strokeWidth=".4" fontFamily="'Noto Sans', sans-serif" fill="#444">f</text>
                  <text x="7.500" y="17" fontSize="14" fontWeight="bold" stroke="#444" strokeWidth=".4" fontFamily="'Noto Sans', sans-serif" fill="#444">x</text>
                  <path d="M25.500 3.500h11v3.500H35l-.5-1.200h-4.500l4 4.200-4 4.200h5l.5-1.200h1.500V16.500H25.500v-1.800l4.500-5-4.500-4.700z" fill="#444" />
                  <path d="M46 9.500h7l-3.500 4z" fill="#000" />
                  <path d="M64 6.500h10.500v2.200H64zM64 11.500h10.500v2.200H64z" fill="#888" stroke="#555" strokeWidth=".8" />
                </svg>
                <div className="ml-[9px] h-6 w-px bg-[#d6d6d6]" />
                <div className="ml-[3px] flex h-6 w-[961px] items-center border border-[#b4b4b4] bg-white pb-0.5 pl-[5px]">
                  <T w={232}>Contract Expiry In 2024-10-02 Days</T>
                </div>
                <Arrow className="mb-[3px] ml-1 h-[6px] w-[11px] text-[#3c3c3c]" />
              </div>
              <div className="flex">
                <Sheet />
                <div className="flex h-[470px] w-3 flex-col items-center bg-[#d0d0d0]">
                  <div className="flex h-[5px] w-full items-center justify-center bg-[#b4b4b4]">
                    <div className="h-px w-1.5 bg-black" />
                  </div>
                  <div className="mt-1.5 h-[216px] w-1.5 rounded-[2px] bg-[#868686]" />
                </div>
              </div>
              <div className="flex h-3 w-[1235px] shrink-0 items-center bg-[#d0d0d0] pl-1">
                <div className="h-1.5 w-[540px] rounded-[2px] bg-[#868686]" />
                <div className="ml-auto flex h-full w-[5px] items-center justify-center bg-[#b4b4b4]">
                  <div className="h-1.5 w-px bg-black" />
                </div>
              </div>
              <div className="flex h-[25px] shrink-0">
                <svg viewBox="0 0 143 25" className="h-[25px] w-[143px]">
                  <path d="M23 4v16l-8-8zM47 4v16l-8-8zM64 4v16l8-8zM88 4v16l8-8z" fill="#b5b5b5" />
                  <path d="M14.500 4v16M97.500 4v16" stroke="#b5b5b5" />
                  <path d="M124.500 4v17M116 12.500h17" stroke="#3c3c3c" strokeWidth="3" />
                </svg>
                <div className="flex w-[49px] items-center justify-center border-b-[3px] border-[#999] bg-white text-[12px]">
                  <T w={24}>exel</T>
                </div>
              </div>
            </div>
            <div className="flex h-[540px] w-[47px] border-b border-l border-[#b4b4b4]">
              <div className="mt-0 flex w-1.5 flex-col border-t border-[#b4b4b4] bg-[#f7f7f7]">
                <div className="mt-[233px] -ml-px flex h-[73px] w-[7px] items-center justify-center bg-[#999]">
                  <svg viewBox="0 0 5 8" className="h-2 w-[5px]">
                    <path d="M0 0l5 4-5 4z" fill="#fff" />
                  </svg>
                </div>
              </div>
              <div className="-ml-px flex w-10 flex-col items-center border-t border-l border-[#b4b4b4] pt-[7px]">
                <Icon n="gear" />
                <div className="mt-[7px] h-px w-[22px] bg-[#e0e0e0]" />
                <Icon n="props" className="mt-[7px]" />
                <Icon n="styles" className="mt-[11px]" />
                <Icon n="gallery" className="mt-[11px]" />
                <div className="mt-[7px] flex size-8 items-center justify-center rounded-[4px] border border-[#bcbcbc]">
                  <Icon n="compass" />
                </div>
                <Icon n="fx" className="mt-[8px]" />
              </div>
            </div>
          </div>

          <div className="flex h-[39px] shrink-0 items-center pb-px">
            <Grip />
            <svg viewBox="0 0 22 22" className="ml-1.5 size-[22px]">
              <circle cx="11" cy="11" r="10.500" fill="#d93a42" stroke="#9f252b" />
              <path d="M7.500 7.500l7 7M14.500 7.500l-7 7" stroke="#fff" strokeWidth="2.400" />
            </svg>
            <Combo className="ml-[5px] w-[250px]">
              <T w={30} className="ml-2.5 text-[#8b8b8b]">Find</T>
            </Combo>
            <svg viewBox="0 0 50 18" className="ml-[9px] h-[18px] w-[50px]">
              <path d="M8 1.500l7.500 8-2 2L9.700 8v8H6.300V8l-3.800 3.500-2-2z" fill="#b5b5b5" />
              <path d="M41 16.500l7.500-8-2-2-3.800 3.500V2h-3.400v8l-3.800-3.500-2 2z" fill="#b5b5b5" />
            </svg>
            <T w={41} className="mb-px ml-2.5 text-[12px] text-[#8b8b8b]">Find All</T>
            <div className="ml-2.5 size-4 rounded-[3px] border border-[#b0b0b0] bg-white" />
            <T w={127} className="mb-px ml-[7px]">Formatted Display</T>
            <div className="ml-[5px] size-4 rounded-[3px] border border-[#b0b0b0] bg-white" />
            <T w={79} className="mb-px ml-[7px]">Match Case</T>
            <div className="ml-1.5 h-[33px] w-px bg-[#d6d6d6]" />
            <Icon n="find" className="ml-2" />
            <div className="ml-2 h-[33px] w-px bg-[#d6d6d6]" />
          </div>

          <div className="flex h-[21px] shrink-0 items-center border-t border-[#b4b4b4] pt-0.5 pl-2.5 text-[12px]">
            <T w={67}>Sheet 1 of 1</T>
            <VSep className="ml-[99px]" />
            <VSep className="ml-[174px]" />
            <T w={84} className="ml-2">PageStyle_exel</T>
            <VSep className="ml-[107px]" />
            <T w={76} className="ml-[59px]">English (India)</T>
            <VSep className="ml-[57px]" />
            <VSep className="ml-[67px]" />
            <svg viewBox="0 0 16 12" className="ml-[7px] h-3 w-4">
              <path d="M0 1.500h5M2.500 1.500v9M0 10.500h5M8.500 8v2.500h6V8" fill="none" stroke="#777" />
            </svg>
            <VSep className="ml-[5px]" />
            <svg viewBox="0 0 14 11" className="mb-0.5 ml-2 h-[11px] w-3.5">
              <rect x=".5" y=".5" width="12" height="10" fill="#e4e4e4" stroke="#999" />
              <path d="M5.500 1.500h2.500v3.500h2.500L6.700 9 3 5h2.500z" fill="#555" />
            </svg>
            <VSep className="ml-1.5" />
            <VSep className="ml-7" />
            <T w={94} className="ml-[59px]">Average: ; Sum: 0</T>
            <VSep className="ml-14" />
            <svg viewBox="0 0 128 14" className="ml-[9px] h-3.5 w-[128px]">
              <path d="M0 7.500h9M116 7.500h10M121.500 3v9" stroke="#777" />
              <path d="M15 7h97" stroke="#999" strokeWidth="1.800" />
              <circle cx="63" cy="7" r="4.500" fill="#f4f4f4" stroke="#888" />
            </svg>
            <VSep className="ml-[5px]" />
            <T w={31} className="ml-[4px]">100%</T>
          </div>
        </div>
      </div>
    </div>
  );
}
